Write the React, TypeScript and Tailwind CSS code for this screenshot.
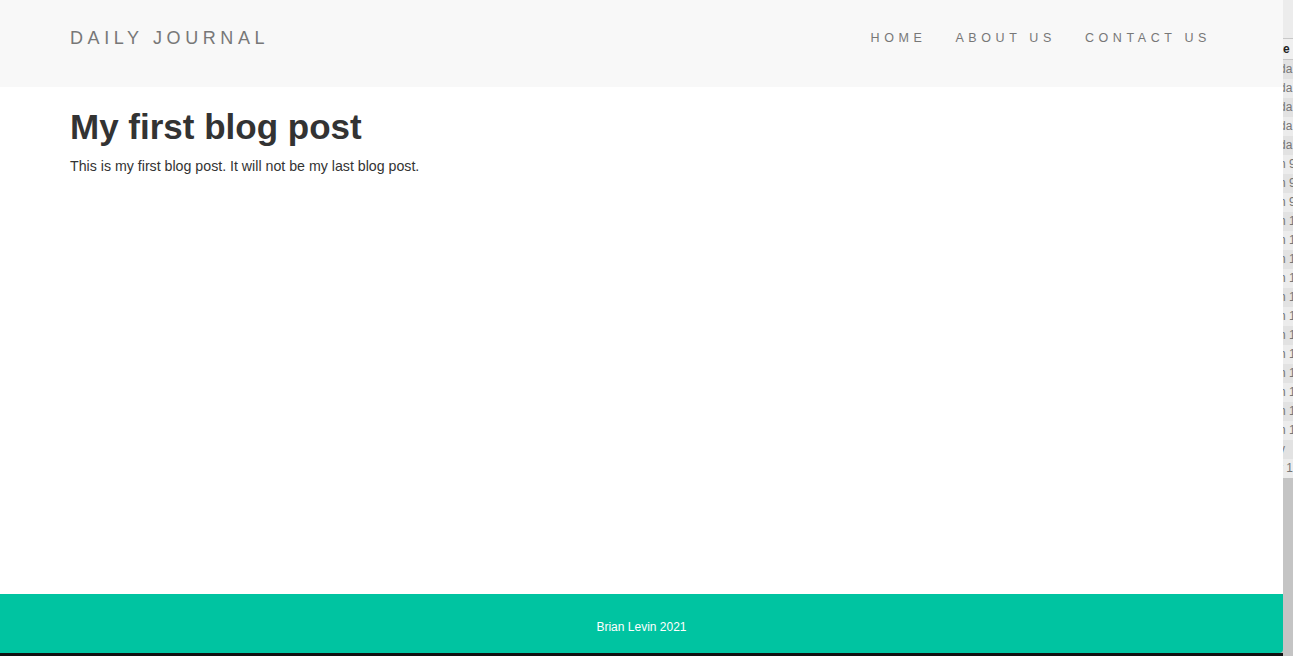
export default function App() {
  const rows = ["da", "da", "da", "da", "da", "n 9", "n 9", "n 9", "n 1", "n 1", "n 1", "n 1", "n 1", "n 1", "n 1", "n 1", "n 1", "n 1", "n 1", "n 1", "y", "r 1"];
  return (
    <div className="flex h-[656px] w-[1293px] overflow-hidden bg-[#b9b9b9] font-['Liberation_Sans',Arial,sans-serif]">
      <div className="flex w-[1283px] flex-col">
        <nav className="flex h-[87px] items-center justify-between bg-[#f8f8f8] pb-[10px] pl-[70px] pr-[72px]">
          <span className="text-[18px] tracking-[4.6px] text-[#777]">DAILY JOURNAL</span>
          <ul className="flex gap-[29px] text-[12.5px] tracking-[4.6px] text-[#777]">
            <li>HOME</li>
            <li>ABOUT US</li>
            <li>CONTACT US</li>
          </ul>
        </nav>
        <main className="flex-1 bg-white px-[70px] pt-[20px] text-[#333]">
          <h1 className="text-[35px] font-bold leading-[40px]">My first blog post</h1>
          <p className="mt-[9px] text-[14.2px] leading-[20px]">This is my first blog post. It will not be my last blog post.</p>
        </main>
        <footer className="flex h-[59px] items-center justify-center rounded-br-[4px] bg-[#00c4a1] pt-[6px] text-[12px] text-white">
          Brian Levin 2021
        </footer>
        <div className="h-[3px] bg-[#111]"></div>
      </div>
      <div className="flex w-[10px] flex-col overflow-hidden bg-[#e4e4e4] text-[12px] text-[#777]">
        <div className="h-[38px] bg-[#ececec]"></div>
        <div className="h-[22px] overflow-hidden border-y border-[#c8c8c8] bg-[#f0f0f0] font-bold leading-[20px] text-[#222]">
          <span className="-ml-[4px] block">te</span>
        </div>
        {rows.map((r, i) => (
          <div key={i} className={`h-[19px] overflow-hidden whitespace-nowrap leading-[19px] ${i % 2 ? "bg-[#ececec]" : "bg-[#e2e2e2]"}`}>
            <span className="-ml-[4px] block">{r}</span>
          </div>
        ))}
        <div className="flex-1 bg-[#c4c4c4]"></div>
      </div>
    </div>
  );
}
